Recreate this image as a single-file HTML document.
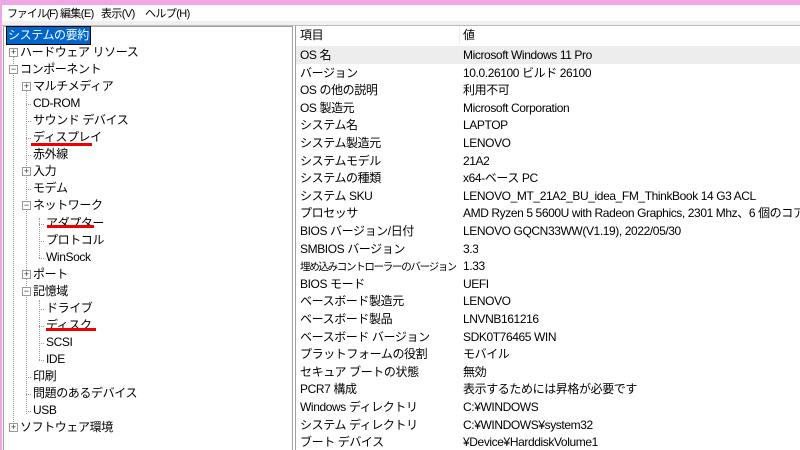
<!DOCTYPE html>
<html><head><meta charset="utf-8"><style>
*{margin:0;padding:0;box-sizing:border-box}
html,body{width:800px;height:450px;overflow:hidden}
body{background:#fff;position:relative;font-family:"Liberation Sans","Noto Sans CJK JP",sans-serif;font-size:12px;color:#000}
#w{position:absolute;left:0;top:0;width:800px;height:450px;overflow:hidden}
.a{position:absolute;white-space:nowrap;line-height:16px;letter-spacing:-0.4px}
.pink{position:absolute;left:0;top:0;width:800px;height:5px;background:#f0a6e6}
.lp{position:absolute;left:0;top:0;width:2px;height:450px;background:#f0a6e6}
.menu{position:absolute;left:2px;top:5px;width:798px;height:16px;background:#fff}
.gb{position:absolute;left:2px;top:21px;width:798px;height:5px;background:#f0f0f0;border-bottom:1px solid #bbb}
.left{position:absolute;left:3px;top:26px;width:290px;height:424px;border:1px solid #a0a0a0;border-bottom:none;background:#fff}
.right{position:absolute;left:295px;top:26px;width:505px;height:424px;border-left:1px solid #a0a0a0}
.box{position:absolute;width:9px;height:9px;border:1px solid #999;background:#fff;font-size:9px;line-height:7px;text-align:center;color:#333}
.vl{position:absolute;border-left:1px dotted #999}
.hl{position:absolute;border-top:1px dotted #999;width:5px}
.red{position:absolute;height:3px;background:#e00}
.row{position:absolute;left:296px;width:504px;height:17.6px}
.m{font-size:11px;letter-spacing:-0.6px}
</style></head><body><div id="w">
<div class="pink"></div><div class="lp"></div>
<div class="menu"></div>
<div class="a m" style="left:7px;top:6px;letter-spacing:-1.1px">ファイル(F)</div>
<div class="a m" style="left:60px;top:6px">編集(E)</div>
<div class="a m" style="left:101px;top:6px">表示(V)</div>
<div class="a m" style="left:145px;top:6px">ヘルプ(H)</div>
<div class="gb"></div>
<div class="left"></div>
<div class="right"></div>
<div class="row" style="top:46px;background:#ededed"></div>
<div style="position:absolute;left:459px;top:26px;width:1px;height:19px;background:#eee"></div>

<div class="a" style="left:7px;top:27px;background:#0066cc;color:#fff;outline:1px solid #000;padding:0 1px;height:17px">システムの要約</div>
<div class="vl" style="left:13px;top:48px;height:382px"></div>
<div class="vl" style="left:26px;top:82px;height:332px"></div>
<div class="vl" style="left:39px;top:218px;height:40px"></div>
<div class="vl" style="left:39px;top:300px;height:60px"></div>
<div id="t"></div>
<div class="red" style="left:31px;top:143px;width:61px"></div>
<div class="red" style="left:47px;top:225px;width:47px"></div>
<div class="red" style="left:46px;top:328px;width:50px"></div>
</div>
<script>
const L=[[0,'ハードウェア リソース','+'],[0,'コンポーネント','-'],[1,'マルチメディア','+'],[1,'CD-ROM'],[1,'サウンド デバイス'],[1,'ディスプレイ'],[1,'赤外線'],[1,'入力','+'],[1,'モデム'],[1,'ネットワーク','-'],[2,'アダプター'],[2,'プロトコル'],[2,'WinSock'],[1,'ポート','+'],[1,'記憶域','-'],[2,'ドライブ'],[2,'ディスク'],[2,'SCSI'],[2,'IDE'],[1,'印刷'],[1,'問題のあるデバイス'],[1,'USB'],[0,'ソフトウェア環境','+']];
let h='';
L.forEach((e,i)=>{const y=44+i*17.05;const bx=[9,22,35][e[0]];const tx=[20,33,46][e[0]];
if(e[2])h+=`<div class="box" style="left:${bx}px;top:${y+4}px">${e[2]=='+'?'+':'−'}</div>`;
else h+=`<div class="hl" style="left:${bx+4}px;top:${y+9}px"></div>`;
h+=`<div class="a" style="left:${tx}px;top:${y}px">${e[1]}</div>`;});
const R=[['項目','値'],['OS 名','Microsoft Windows 11 Pro'],['バージョン','10.0.26100 ビルド 26100'],['OS の他の説明','利用不可'],['OS 製造元','Microsoft Corporation'],['システム名','LAPTOP'],['システム製造元','LENOVO'],['システムモデル','21A2'],['システムの種類','x64-ベース PC'],['システム SKU','LENOVO_MT_21A2_BU_idea_FM_ThinkBook 14 G3 ACL'],['プロセッサ','AMD Ryzen 5 5600U with Radeon Graphics, 2301 Mhz、6 個のコア、12'],['BIOS バージョン/日付','LENOVO GQCN33WW(V1.19), 2022/05/30'],['SMBIOS バージョン','3.3'],['埋め込みコントローラーのバージョン','1.33'],['BIOS モード','UEFI'],['ベースボード製造元','LENOVO'],['ベースボード製品','LNVNB161216'],['ベースボード バージョン','SDK0T76465 WIN'],['プラットフォームの役割','モバイル'],['セキュア ブートの状態','無効'],['PCR7 構成','表示するためには昇格が必要です'],['Windows ディレクトリ','C:¥WINDOWS'],['システム ディレクトリ','C:¥WINDOWS¥system32'],['ブート デバイス','¥Device¥HarddiskVolume1']];
R.forEach((r,i)=>{const y=i==0?27:46+(i-1)*17.6+1;
h+=`<div class="a" style="left:300px;top:${y+(i==13?1:0)}px;max-width:160px;overflow:hidden;${i==13?'font-size:10.5px;letter-spacing:-1.3px':''}">${r[0]}</div><div class="a" style="left:463px;top:${y}px;max-width:337px;overflow:hidden">${r[1]}</div>`;});
document.getElementById('t').innerHTML=h;
</script>
</body></html>
